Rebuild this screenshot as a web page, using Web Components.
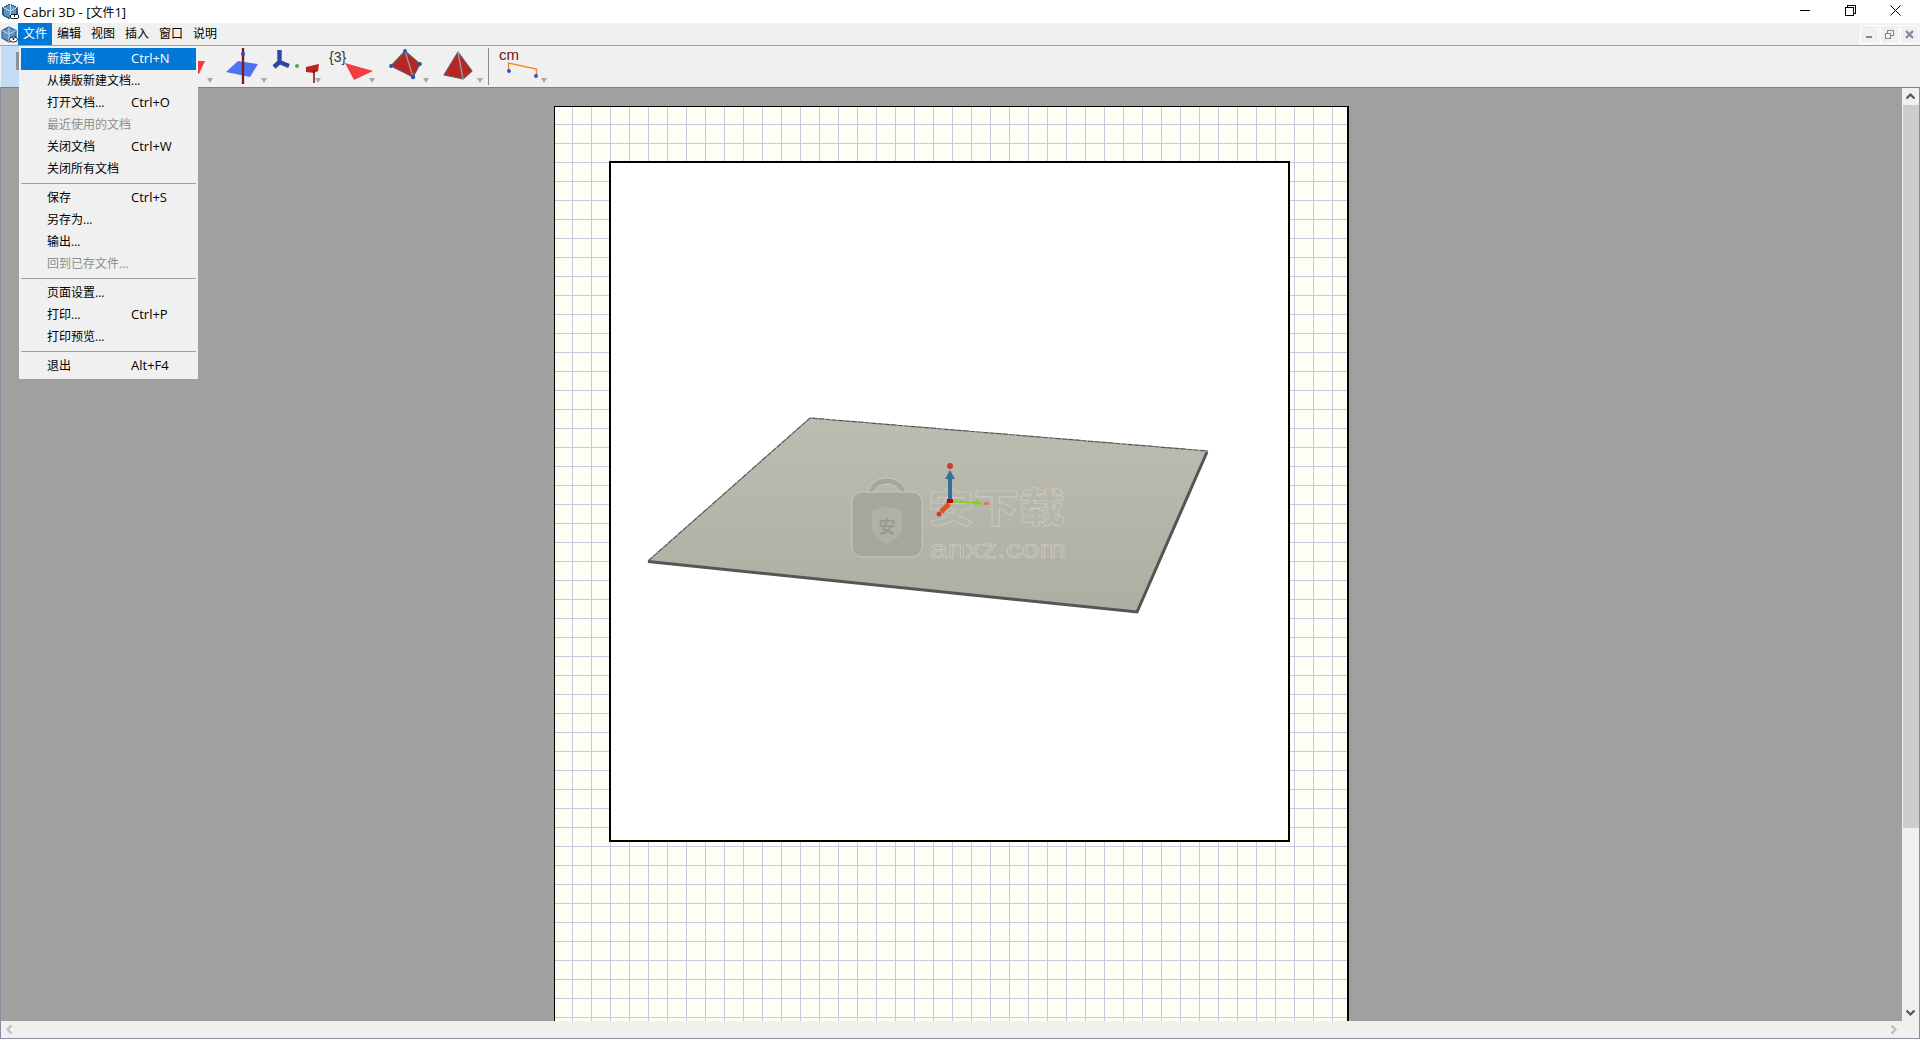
<!DOCTYPE html>
<html>
<head>
<meta charset="utf-8">
<title>Cabri 3D</title>
<style>
html, body { margin: 0; height: 100%; background: #fff; overflow: hidden; }
body { font: 12px "Open Sans", "Noto Sans CJK SC", sans-serif; color: #000; }
</style>
</head>
<body>
<app-window>
  <title-bar><span style="font-size:13px">Cabri 3D - [</span>文件<span style="font-size:13px">1]</span></title-bar>
  <menu-bar>
    <menu-title active>文件</menu-title>
    <menu-title>编辑</menu-title>
    <menu-title>视图</menu-title>
    <menu-title>插入</menu-title>
    <menu-title>窗口</menu-title>
    <menu-title>说明</menu-title>
  </menu-bar>
  <tool-bar>
    <tool-button selected>
      <svg viewBox="1 46 159 41" width="159" height="41"><rect x="16" y="52" width="3" height="18" fill="#8c9299"/></svg>
    </tool-button>
    <tool-button>
      <svg viewBox="160 46 54 41" width="54" height="41"><polygon points="175,61 205,61 199,74" fill="#f43b3f"/></svg>
    </tool-button>
    <tool-button>
      <svg viewBox="214 46 54 41" width="54" height="41">
        <polygon points="226,72 238,61 258,64 250,77" fill="#4f72f2"/>
        <line x1="243" y1="48" x2="243" y2="84" stroke="#7a1c1c" stroke-width="2.4"/>
        <circle cx="243" cy="54" r="2" fill="#2c48b0"/>
      </svg>
    </tool-button>
    <tool-button>
      <svg viewBox="268 46 54 41" width="54" height="41">
        <path d="M279.500 50V62L289 66M279.500 62L274 67" stroke="#2e45a8" stroke-width="4.400" fill="none" stroke-linejoin="round"/>
        <circle cx="297" cy="66" r="2" fill="#3fb54a"/>
        <polygon points="306,67 319,64 318,71 314,73 306,72" fill="#c02020"/>
        <line x1="314" y1="70" x2="314" y2="83" stroke="#8a1818" stroke-width="1.6"/>
      </svg>
    </tool-button>
    <tool-button>
      <svg viewBox="322 46 54 41" width="54" height="41">
        <text x="329" y="62" font-family="Liberation Sans" font-size="14" fill="#333">{3}</text>
        <polygon points="345,63 373,71 354,80" fill="#f43b3f"/>
      </svg>
    </tool-button>
    <tool-button>
      <svg viewBox="376 46 54 41" width="54" height="41">
        <polygon points="405,51 391,66 413,77 420,64" fill="#b92424" stroke="#5f5f5f" stroke-width="1.2" stroke-linejoin="round"/>
        <line x1="405" y1="51" x2="413" y2="77" stroke="#999" stroke-width="1.4"/>
        <circle cx="405" cy="51" r="1.9" fill="#2f4cc0"/>
        <circle cx="391" cy="66" r="1.9" fill="#2f4cc0"/>
        <circle cx="420" cy="64" r="1.9" fill="#2f4cc0"/>
        <circle cx="413" cy="77" r="2.2" fill="#2f4cc0"/>
      </svg>
    </tool-button>
    <tool-button>
      <svg viewBox="430 46 54 41" width="54" height="41">
        <polygon points="458,52 444,75 463,79 472,71" fill="#b92424" stroke="#5f5f5f" stroke-width="1.2" stroke-linejoin="round"/>
        <line x1="458" y1="52" x2="463" y2="79" stroke="#999" stroke-width="1.4"/>
      </svg>
    </tool-button>
    <tool-sep></tool-sep>
    <tool-button wide>
      <svg viewBox="489 46 59 41" width="59" height="41">
        <text x="499" y="60" font-family="Liberation Sans" font-size="15" fill="#7a1010">cm</text>
        <path d="M508.500 70V63L536.500 69V76" fill="none" stroke="#f08a20" stroke-width="1.4"/>
        <circle cx="509" cy="71" r="1.9" fill="#2f4cc0"/>
        <circle cx="536" cy="76" r="1.9" fill="#2f4cc0"/>
      </svg>
    </tool-button>
  </tool-bar>
  <work-area>
    <doc-page></doc-page>
  </work-area>
</app-window>
<file-menu>
  <menu-row shortcut="Ctrl+N" highlighted>新建文档</menu-row>
  <menu-row>从模版新建文档...</menu-row>
  <menu-row shortcut="Ctrl+O">打开文档...</menu-row>
  <menu-row disabled>最近使用的文档</menu-row>
  <menu-row shortcut="Ctrl+W">关闭文档</menu-row>
  <menu-row>关闭所有文档</menu-row>
  <menu-sep></menu-sep>
  <menu-row shortcut="Ctrl+S">保存</menu-row>
  <menu-row>另存为...</menu-row>
  <menu-row>输出...</menu-row>
  <menu-row disabled>回到已存文件...</menu-row>
  <menu-sep></menu-sep>
  <menu-row>页面设置...</menu-row>
  <menu-row shortcut="Ctrl+P">打印...</menu-row>
  <menu-row>打印预览...</menu-row>
  <menu-sep></menu-sep>
  <menu-row shortcut="Alt+F4">退出</menu-row>
</file-menu>

<script>
// every element just stamps its html into an open shadow root
function element(name, html, extra) {
  const tpl = document.createElement("template");
  tpl.innerHTML = html;
  class El extends HTMLElement {
    constructor() {
      super();
      this.attachShadow({mode: "open"});
      this.shadowRoot.appendChild(tpl.content.cloneNode(true));
    }
    connectedCallback() {
      if (extra) extra.call(this);
    }
  }
  customElements.define(name, El);
}

const appIcon = `
<svg width="17" height="17" viewBox="0 0 17 17">
  <polygon points="8,1 15,4.500 15,12 8,16 1,12 1,4.500" fill="#5b93c4" stroke="#2a5a8c" stroke-width="1.200"/>
  <path d="M8 1V8M1 4.500L8 8L15 4.500M8 8V16" stroke="#bcd6ea" stroke-width="1" fill="none"/>
  <ellipse cx="12.500" cy="13.500" rx="4" ry="2.500" fill="#fff" stroke="#222"/>
  <circle cx="12.500" cy="13" r="1" fill="#222"/>
</svg>`;

element("app-window", `
<style>
:host { display: flex; flex-direction: column; height: 1039px; }
</style>
<slot></slot>`);

element("title-bar", `
<style>
:host { display: flex; align-items: center; height: 23px; background: #fff; flex: none; }
.icon { display: flex; margin: 0 4px 0 2px; }
.text { flex: 1; }
.btn { width: 45px; height: 20px; display: flex; align-items: center; justify-content: center; }
.btns { display: flex; margin: 0 2px 3px 0; }
svg { shape-rendering: crispEdges; }
.x { shape-rendering: auto; }
</style>
<span class="icon">${appIcon}</span>
<span class="text"><slot></slot></span>
<div class="btns">
  <div class="btn"><svg width="11" height="11"><line x1="0" y1="5.500" x2="10" y2="5.500" stroke="#000"/></svg></div>
  <div class="btn"><svg width="11" height="11"><path d="M.5 2.500h7.500v7.500h-7.500zM2.500 2.500v-2h7.500v7.500h-2" fill="none" stroke="#000"/></svg></div>
  <div class="btn"><svg class="x" width="11" height="11"><path d="M.5 .5L10.500 10.500M10.500 .5L.5 10.500" stroke="#000"/></svg></div>
</div>`);

element("menu-bar", `
<style>
:host { display: flex; align-items: stretch; height: 22px; background: #f0f0f0; border-bottom: 1px solid #a0a0a0; flex: none; }
.icon { display: flex; align-items: center; width: 18px; padding-left: 1px; box-sizing: border-box; }
.mdi { display: flex; gap: 1px; margin: 2px 1px 0 auto; height: 19px; }
.mdi div { width: 17px; height: 17px; border: 1px solid #fff; display: flex; align-items: center; justify-content: center; }
</style>
<span class="icon">${appIcon}</span>
<slot></slot>
<div class="mdi">
  <div><svg width="9" height="9" shape-rendering="crispEdges"><rect x="1" y="6" width="6" height="2" fill="#7b8794"/></svg></div>
  <div><svg width="9" height="9" shape-rendering="crispEdges"><path d="M.5 3.500h5v5h-5zM2.500 3v-2.500h6v5h-2.500" fill="none" stroke="#7b8794"/></svg></div>
  <div><svg width="9" height="9"><path d="M1 1L8 8M8 1L1 8" stroke="#7b8794" stroke-width="2.200"/></svg></div>
</div>`);

element("menu-title", `
<style>
:host { display: flex; align-items: center; padding: 0 5px; line-height: 22px; }
:host([active]) { background: #0078d7; color: #fff; }
</style>
<slot></slot>`);

element("tool-bar", `
<style>
:host { display: flex; height: 41px; background: #f0f0f0; border-bottom: 1px solid #808080; flex: none; }
</style>
<slot></slot>`);

element("tool-button", `
<style>
:host { display: block; position: relative; width: 54px; height: 41px; flex: none; }
:host([wide]) { width: 59px; }
:host([selected]) { width: 159px; background: linear-gradient(90deg, #c2dcf3 0 18px, transparent 18px); margin-left: 1px; }
:host([selected]) .arrow { display: none; }
.arrow { position: absolute; right: 1px; top: 32px; width: 0; height: 0; border: 3.500px solid transparent; border-top: 5px solid #a8a8a8; border-bottom: 0; }
::slotted(svg) { display: block; }
</style>
<slot></slot>
<div class="arrow"></div>`);

element("tool-sep", `
<style>
:host { display: block; width: 1px; margin: 2px 0 2px 4px; background: #888; flex: none; }
</style>`);

element("file-menu", `
<style>
:host { display: block; position: absolute; left: 19px; top: 46px; width: 179px; height: 333px; padding: 2px 2px 0; box-sizing: border-box; background: #f0f0f0; }
</style>
<slot></slot>`);

element("menu-row", `
<style>
:host { display: flex; height: 22px; line-height: 22px; padding-left: 26px; }
:host([highlighted]) { background: #0078d7; color: #fff; }
:host([disabled]) { color: #8d8d8d; }
.label { width: 84px; white-space: nowrap; }
.key { font-size: 13px; line-height: 20px; }
</style>
<span class="label"><slot></slot></span>
<span class="key"></span>`, function () {
  this.shadowRoot.querySelector(".key").textContent = this.getAttribute("shortcut") || "";
});

element("menu-sep", `
<style>
:host { display: block; height: 7px; box-sizing: border-box; padding-top: 3px; }
div { height: 1px; background: #a0a0a0; }
</style>
<div></div>`);

element("scroll-arrow", `
<style>
:host { display: flex; align-items: center; justify-content: center; width: 17px; height: 17px; flex: none; }
</style>
<svg width="11" height="11" viewBox="0 0 11 11"><polyline fill="none" stroke-width="2.200"/></svg>`, function () {
  const pts = {up: "1.500,7.500 5.500,3.500 9.500,7.500", down: "1.500,3.500 5.500,7.500 9.500,3.500",
    left: "7.500,1.500 3.500,5.500 7.500,9.500", right: "3.500,1.500 7.500,5.500 3.500,9.500"};
  const line = this.shadowRoot.querySelector("polyline");
  line.setAttribute("points", pts[this.getAttribute("dir")]);
  line.setAttribute("stroke", this.hasAttribute("off") ? "#bdbdbd" : "#555");
});

element("work-area", `
<style>
:host { display: grid; grid-template-columns: 1fr 17px; grid-template-rows: 933px 17px; flex: none; border: solid #8a8fa0; border-width: 0 1px 1px 1px; background: #f0f0f0; }
.canvas { background: #a0a0a0; overflow: hidden; display: flex; justify-content: center; align-items: flex-start; padding-top: 18px; box-sizing: border-box; min-width: 0; }
.v { display: flex; flex-direction: column; }
.thumb { height: 723px; background: #cdcdcd; margin: 0 0 0 1px; }
.gap { flex: 1; }
.h { display: flex; justify-content: space-between; }
</style>
<div class="canvas"><slot></slot></div>
<div class="v">
  <scroll-arrow dir="up"></scroll-arrow>
  <div class="thumb"></div>
  <div class="gap"></div>
  <scroll-arrow dir="down"></scroll-arrow>
</div>
<div class="h">
  <scroll-arrow dir="left" off></scroll-arrow>
  <scroll-arrow dir="right" off></scroll-arrow>
</div>
<div></div>`);

element("doc-page", `
<style>
:host { display: block; flex: none; width: 795px; height: 1200px; box-sizing: border-box; padding: 54px 0 0 54px;
  border: solid #000; border-width: 1px 2px 0 1px;
  background-color: #fffff4;
  background-image: linear-gradient(#c8c8e2 1px, transparent 1px), linear-gradient(90deg, #c8c8e2 1px, transparent 1px);
  background-size: 19px 19px; background-position: 17px 17px; }
.sheet { width: 681px; height: 681px; box-sizing: border-box; border: 2px solid #000; background: #fff; }
svg { display: block; }
</style>
<div class="sheet">
  <svg width="677" height="677" viewBox="611 163 677 677">
    <defs>
      <linearGradient id="pl" x1="0" y1="0" x2="0" y2="1">
        <stop offset="0" stop-color="#bcbcb0"/><stop offset="1" stop-color="#aeaea2"/>
      </linearGradient>
    </defs>
    <polygon points="810,418 1208,451 1137,612 648,561" fill="url(#pl)"/>
    <path d="M648 561L810 418L1208 451" fill="none" stroke="#555" stroke-width="1.200" stroke-dasharray="6 .6"/>
    <path d="M648 561.500L1137 612L1207 452" fill="none" stroke="#555" stroke-width="3"/>

    <rect x="852" y="492" width="70" height="65" rx="10" fill="#a6a69c" stroke="#cfcfc6" stroke-width=".8"/>
    <path d="M868 492c2-9 10-14 19-14s17 5 19 14h-6c-2-5-7-8-13-8s-11 3-13 8z" fill="#a6a69c" stroke="#cfcfc6" stroke-width=".8"/>
    <path d="M872 511c5-3 10-4 15-4s10 1 15 4v18c0 7-9 12-15 15c-6-3-15-8-15-15z" fill="#b0b0a6"/>
    <text x="887" y="533" text-anchor="middle" font-family="Noto Sans CJK SC" font-size="17" font-weight="700" fill="#9a9a90">安</text>
    <g fill="none" stroke="#d0d0c8" stroke-width=".6">
      <text x="928" y="522" font-size="40" font-weight="900" font-family="Noto Sans CJK SC" textLength="137" lengthAdjust="spacingAndGlyphs">安下载</text>
      <text x="930" y="558" font-size="26" font-family="Liberation Sans" textLength="136" lengthAdjust="spacingAndGlyphs">anxz.com</text>
    </g>

    <line x1="950" y1="478" x2="950" y2="500" stroke="#3a6c9c" stroke-width="4"/>
    <polygon points="950,470 955,479 945,479" fill="#3a6c9c"/>
    <circle cx="950" cy="466" r="3" fill="#c8402f"/>
    <path d="M952 501L976 503" stroke="#7ed321" stroke-width="2"/>
    <polygon points="976,499 983,504 975,505" fill="#7ed321"/>
    <rect x="984" y="502" width="5" height="3" fill="#d08070"/>
    <path d="M949 504L941 512" stroke="#e0501c" stroke-width="5"/>
    <circle cx="939" cy="514" r="2.500" fill="#c8402f"/>
    <rect x="947" y="499" width="6" height="4" fill="#c80000"/>
  </svg>
</div>`);
</script>
</body>
</html>
